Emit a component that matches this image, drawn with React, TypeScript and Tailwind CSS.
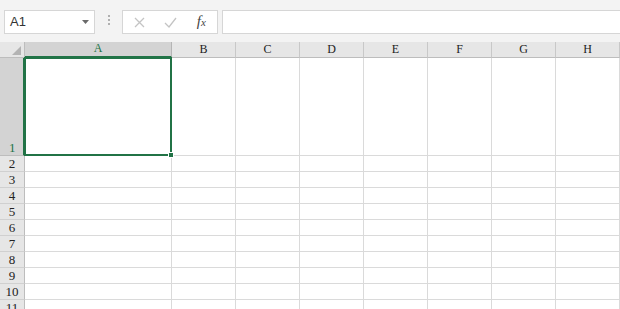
import { ChevronDown } from "lucide-react";

const cols = ["B", "C", "D", "E", "F", "G", "H"];
const rows = [2, 3, 4, 5, 6, 7, 8, 9, 10, 11];

const headFont = { fontFamily: '"Liberation Serif", "DejaVu Serif", serif' };

/**
 * Formula bar across the top: name box, separator, buttons and input.
 */
const FormulaBar = () => (
  <div className="flex h-[42px] items-start gap-0 bg-[#f3f3f3] pt-[10px] pl-[4px]">
    <div className="flex h-[24px] w-[91px] items-center justify-between border border-[#d6d6d6] bg-white pr-[5px] pl-[5px]">
      <span
        className="text-[13px] text-[#333]"
        style={{ fontFamily: '"Liberation Sans", Arial, sans-serif' }}
      >
        A1
      </span>
      <svg width="7" height="4" viewBox="0 0 7 4">
        <path d="M0 0h7L3.5 4z" fill="#6a6a6a" />
      </svg>
    </div>
    <div className="flex w-[27px] flex-col items-center justify-center gap-[2px] pt-[5px]">
      <div className="h-[2px] w-[2px] bg-[#b0b0b0]" />
      <div className="h-[2px] w-[2px] bg-[#b0b0b0]" />
      <div className="h-[2px] w-[2px] bg-[#b0b0b0]" />
    </div>
    <div className="flex h-[24px] w-[96px] items-center border border-[#d6d6d6] bg-white">
      <div className="flex w-[32px] justify-center pl-[1px]">
        <svg width="11" height="11" viewBox="0 0 11 11">
          <path d="M1 1l9 9M10 1l-9 9" stroke="#c4c4c4" strokeWidth="1.3" />
        </svg>
      </div>
      <div className="flex w-[32px] justify-center">
        <svg width="13" height="11" viewBox="0 0 13 11">
          <path d="M1 6l4 4 7-9" stroke="#c4c4c4" strokeWidth="1.3" fill="none" />
        </svg>
      </div>
      <div className="flex w-[32px] justify-center">
        <span
          className="text-[15px] leading-[15px] text-[#444] italic"
          style={{ fontFamily: '"Liberation Serif", serif' }}
        >
          f<span className="text-[11px]">x</span>
        </span>
      </div>
    </div>
    <div className="ml-[4px] h-[24px] flex-1 border border-r-0 border-[#d6d6d6] bg-white" />
  </div>
);

const Cell = ({ children }: { children?: React.ReactNode }) => (
  <div className="border-r border-b border-[#dadada] bg-white">{children}</div>
);

export default function App() {
  return (
    <div className="h-[309px] w-[620px] overflow-hidden bg-white">
      <FormulaBar />
      <div
        className="grid grid-cols-[25px_147px_repeat(7,64px)] grid-rows-[16px_98px_repeat(10,16px)]"
        style={headFont}
      >
        {/* corner */}
        <div className="relative border-r border-b border-[#bdbdbd] bg-[#e6e6e6]">
          <svg className="absolute right-[3px] bottom-[2px]" width="9" height="9" viewBox="0 0 9 9">
            <path d="M9 0v9H0z" fill="#b3b3b3" />
          </svg>
        </div>
        <div className="flex items-end justify-center border-r border-b-2 border-r-[#b5b5b5] border-b-[#217346] bg-[#d3d3d3] text-[12px] leading-[15px] text-[#217346]">
          A
        </div>
        {cols.map((c) => (
          <div
            key={c}
            className="flex items-end justify-center border-r border-b border-r-[#c8c8c8] border-b-[#bdbdbd] bg-[#e6e6e6] pb-[1px] text-[12px] leading-[14px] text-[#222]"
          >
            {c}
          </div>
        ))}

        {/* row 1 */}
        <div className="flex items-end justify-start border-r-2 border-b border-r-[#217346] border-b-[#bdbdbd] bg-[#d3d3d3] pl-[9px] text-[13px] leading-[15px] text-[#217346]">
          1
        </div>
        <div className="relative border-r border-b border-[#dadada] bg-white">
          <div className="absolute -top-[1px] -left-[1px] -right-[1px] -bottom-[1px] border-2 border-[#217346]" />
          <div className="absolute -right-[3px] -bottom-[3px] h-[6px] w-[6px] border border-white bg-[#217346]" />
        </div>
        {cols.map((c) => (
          <Cell key={c} />
        ))}

        {rows.map((r) => (
          <div key={r} className="contents">
            <div className="flex items-center justify-center border-r border-b border-r-[#bdbdbd] border-b-[#d0d0d0] bg-[#e6e6e6] text-[13px] leading-[15px] text-[#222]">
              {r}
            </div>
            <Cell />
            {cols.map((c) => (
              <Cell key={c} />
            ))}
          </div>
        ))}
      </div>
    </div>
  );
}
